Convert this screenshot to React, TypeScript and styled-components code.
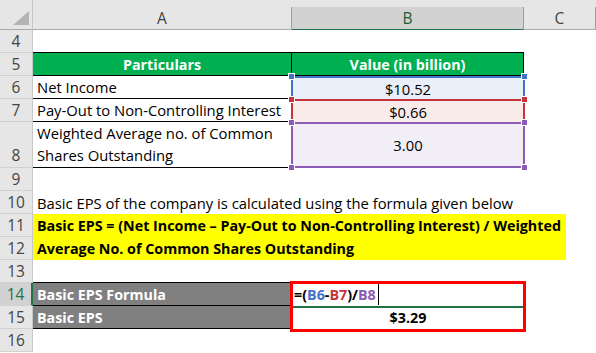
import styled, { createGlobalStyle } from "styled-components";

const GlobalStyle = createGlobalStyle`
    html, body {
        margin: 0;
        padding: 0;
        background: #ffffff;
    }
    body {
        font-family: "Open Sans", "Liberation Sans", sans-serif;
        font-size: 14.8px;
        color: #000000;
    }
`;

const Sheet = styled.div`
    display: grid;
    grid-template-columns: 33px 259px 232px 72px;
    grid-template-rows: 30px repeat(4, 23px) 46px repeat(8, 23px);
    width: 596px;
    height: 353px;
    overflow: hidden;
    background: #ffffff;
`;

const Corner = styled.div`
    background: #e6e6e6;
    border-right: 1px solid #c8c8c8;
    border-bottom: 1px solid #ababab;
    box-sizing: border-box;
    display: flex;
    align-items: flex-end;
    justify-content: flex-end;
    padding: 0 3px 4px 0;
`;

const ColHead = styled.div<{ $active?: boolean }>`
    background: #e6e6e6;
    box-sizing: border-box;
    display: flex;
    flex-direction: column;
    padding-top: 7px;
    border-bottom: 1px solid ${p => (p.$active ? "#217346" : "#ababab")};
`;

const ColLabel = styled.div<{ $active?: boolean }>`
    flex: 1;
    display: flex;
    align-items: center;
    justify-content: center;
    font-size: 15.5px;
    color: ${p => (p.$active ? "#1e5c38" : "#444444")};
    background: ${p => (p.$active ? "#d2d2d2" : "#e6e6e6")};
    border-right: 1px solid #9e9e9e;
    border-bottom: ${p => (p.$active ? "1px solid #217346" : "0")};
`;

const RowNum = styled.div<{ $active?: boolean; $bottom?: boolean }>`
    box-sizing: border-box;
    display: flex;
    align-items: ${p => (p.$bottom ? "flex-end" : "center")};
    padding-bottom: ${p => (p.$bottom ? "1px" : "0")};
    justify-content: center;
    font-size: 15.5px;
    color: ${p => (p.$active ? "#217346" : "#444444")};
    background: ${p => (p.$active ? "#d2d2d2" : "#e6e6e6")};
    border-bottom: 1px solid #d0d0d0;
    border-right: ${p => (p.$active ? "2px solid #217346" : "1px solid #c8c8c8")};
`;

const Cell = styled.div<{ $align?: string; $bold?: boolean }>`
    position: relative;
    box-sizing: border-box;
    display: flex;
    align-items: center;
    justify-content: ${p => p.$align ?? "flex-start"};
    padding: 0 4px;
    white-space: nowrap;
    font-weight: ${p => (p.$bold ? 700 : 400)};
    font-size: ${p => (p.$bold ? "14.3px" : "14.8px")};
`;

const TableCell = styled(Cell)<{ $bg?: string; $fg?: string; $first?: boolean }>`
    background: ${p => p.$bg ?? "#ffffff"};
    color: ${p => p.$fg ?? "#000000"};
    border-bottom: 1px solid #000000;
    border-right: 1px solid #000000;
    box-shadow: ${p => (p.$first ? "0 -1px 0 #000000" : "none")};
`;

const WrapText = styled.div`
    align-self: flex-end;
    white-space: normal;
    line-height: 22px;
    padding-bottom: 1px;
`;

const RefCell = styled(Cell)<{ $color: string; $fill: string; $last?: boolean }>`
    background: ${p => p.$fill};
    border: 2px solid ${p => p.$color};
    border-bottom: ${p => (p.$last ? `2px solid ${p.$color}` : "0")};
    margin-left: -1px;
    margin-right: -1px;
`;

const Handle = styled.span<{ $color: string; $x: "left" | "right"; $y: "top" | "bottom" }>`
    position: absolute;
    width: 5px;
    height: 5px;
    background: ${p => p.$color};
    border: 1px solid #ffffff;
    ${p => p.$x}: -5px;
    ${p => p.$y}: -5px;
    z-index: 3;
`;

const Band = styled.div`
    grid-column: span 3;
    display: flex;
`;

const Yellow = styled.div`
    width: 533px;
    background: #ffff00;
    font-weight: 700;
    font-size: 14.3px;
    display: flex;
    align-items: center;
    padding: 0 4px;
    box-sizing: border-box;
    white-space: nowrap;
`;

const Overflow = styled(Cell)`
    grid-column: span 3;
`;

const Formula = styled.span`
    font-weight: 700;
    display: flex;
    align-items: center;
    height: 100%;
`;

const Ref = styled.span<{ $color: string }>`
    color: ${p => p.$color};
`;

const Caret = styled.span`
    width: 1px;
    height: 21px;
    background: #000000;
    margin-left: 2px;
`;

const ActiveLine = styled.span`
    position: absolute;
    left: -1px;
    right: -1px;
    bottom: -2px;
    height: 2px;
    background: #217346;
    z-index: 2;
`;

const RedFrame = styled.span`
    position: absolute;
    left: -2px;
    right: -2px;
    top: -2px;
    height: 51px;
    border: 3px solid #ff0000;
    box-sizing: border-box;
    z-index: 4;
`;

const BLUE = "#4472c4";
const RED = "#c8343c";
const PURPLE = "#8a5cb6";

const App = () => {
    const blankRows = (n: number) => (
        <>
            <RowNum>{n}</RowNum>
            <Cell />
            <Cell />
            <Cell />
        </>
    );

    return (
        <>
            <GlobalStyle />
            <Sheet>
                <Corner>
                    <svg width="16" height="14" viewBox="0 0 16 14">
                        <polygon points="0,14 16,14 16,0" fill="#b4b4b4" />
                    </svg>
                </Corner>
                <ColHead><ColLabel>A</ColLabel></ColHead>
                <ColHead $active><ColLabel $active>B</ColLabel></ColHead>
                <ColHead><ColLabel>C</ColLabel></ColHead>

                {blankRows(4)}

                <RowNum>5</RowNum>
                <TableCell $first $bold $bg="#00b050" $fg="#ffffff" $align="center">Particulars</TableCell>
                <TableCell $first $bold $bg="#00b050" $fg="#ffffff" $align="center">Value (in billion)</TableCell>
                <Cell />

                <RowNum>6</RowNum>
                <TableCell>Net Income</TableCell>
                <RefCell $color={BLUE} $fill="#e9eff8" $align="center">
                    $10.52
                    <Handle $color={BLUE} $x="left" $y="top" />
                    <Handle $color={BLUE} $x="right" $y="top" />
                </RefCell>
                <Cell />

                <RowNum>7</RowNum>
                <TableCell>Pay-Out to Non-Controlling Interest</TableCell>
                <RefCell $color={RED} $fill="#faebeb" $align="center">
                    $0.66
                    <Handle $color={RED} $x="left" $y="top" />
                    <Handle $color={RED} $x="right" $y="top" />
                </RefCell>
                <Cell />

                <RowNum $bottom>8</RowNum>
                <TableCell>
                    <WrapText>
                        Weighted Average no. of Common
                        <br />
                        Shares Outstanding
                    </WrapText>
                </TableCell>
                <RefCell $color={PURPLE} $fill="#f1eef8" $last $align="center">
                    3.00
                    <Handle $color={PURPLE} $x="left" $y="top" />
                    <Handle $color={PURPLE} $x="right" $y="top" />
                    <Handle $color={PURPLE} $x="left" $y="bottom" />
                    <Handle $color={PURPLE} $x="right" $y="bottom" />
                </RefCell>
                <Cell />

                {blankRows(9)}

                <RowNum>10</RowNum>
                <Overflow>Basic EPS of the company is calculated using the formula given below</Overflow>

                <RowNum>11</RowNum>
                <Band>
                    <Yellow>Basic EPS = (Net Income – Pay-Out to Non-Controlling Interest) / Weighted</Yellow>
                </Band>

                <RowNum>12</RowNum>
                <Band>
                    <Yellow>Average No. of Common Shares Outstanding</Yellow>
                </Band>

                {blankRows(13)}

                <RowNum $active>14</RowNum>
                <TableCell $first $bold $bg="#808080" $fg="#ffffff">Basic EPS Formula</TableCell>
                <Cell $bold style={{ padding: "0 2px" }}>
                    <Formula>
                        =(<Ref $color={BLUE}>B6</Ref>-<Ref $color={RED}>B7</Ref>)/<Ref $color={PURPLE}>B8</Ref>
                    </Formula>
                    <Caret />
                    <ActiveLine />
                    <RedFrame />
                </Cell>
                <Cell />

                <RowNum>15</RowNum>
                <TableCell $bold $bg="#808080" $fg="#ffffff">Basic EPS</TableCell>
                <Cell $bold $align="center">$3.29</Cell>
                <Cell />

                {blankRows(16)}
            </Sheet>
        </>
    );
};

export default App;
